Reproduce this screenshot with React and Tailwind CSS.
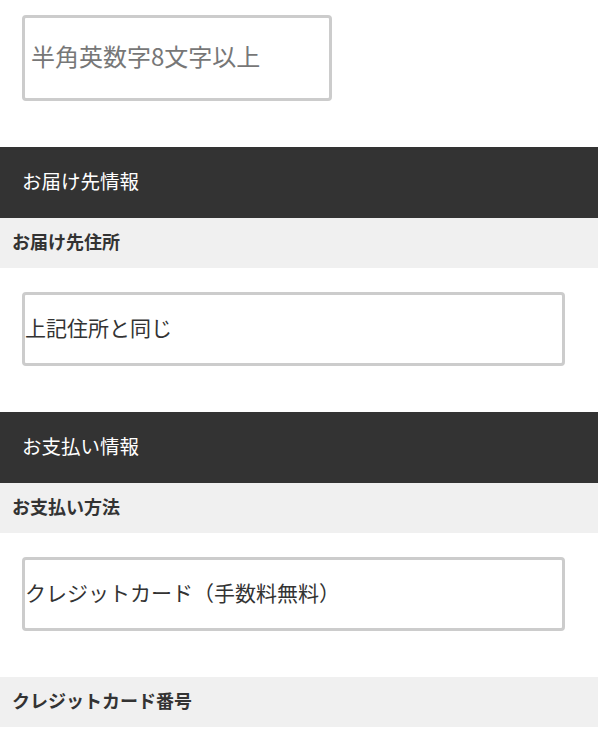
export default function App() {
  return (
    <main
      className="min-h-screen bg-white text-[#333]"
      style={{ fontFamily: '"Noto Sans CJK JP", "Noto Sans", sans-serif' }}
    >
      {/* password field (tail of previous section) */}
      <div className="pl-[22px] pt-[15px] pb-[46px]">
        <input
          type="password"
          placeholder="半角英数字8文字以上"
          className="block h-[86px] w-[310px] rounded-[4px] border-[3px] border-[#cccccc] bg-white px-[6px] pb-[6px] text-[24px] outline-none placeholder:text-[#777777]"
        />
      </div>

      <SectionHeader title="お届け先情報" />
      <FieldLabel label="お届け先住所" />
      <div className="pl-[22px] pt-[24px] pb-[46px]">
        <SelectBox value="上記住所と同じ" />
      </div>

      <SectionHeader title="お支払い情報" />
      <FieldLabel label="お支払い方法" />
      <div className="pl-[22px] pt-[24px] pb-[46px]">
        <SelectBox value="クレジットカード（手数料無料）" />
      </div>

      <FieldLabel label="クレジットカード番号" />
    </main>
  );
}

function SectionHeader({ title }) {
  return (
    <h2 className="flex h-[71px] items-center bg-[#333333] pb-[4px] pl-[22px] text-[19.5px] font-normal text-white">
      {title}
    </h2>
  );
}

function FieldLabel({ label }) {
  return (
    <div className="flex h-[50px] items-center bg-[#f0f0f0] pb-[3px] pl-[12px] text-[18px] font-bold text-[#333]">
      {label}
    </div>
  );
}

function SelectBox({ value }) {
  return (
    <div className="flex h-[74px] w-[543px] items-center rounded-[4px] border-[3px] border-[#cccccc] bg-white pb-[2px] text-[21px] text-[#333]">
      {value}
    </div>
  );
}
